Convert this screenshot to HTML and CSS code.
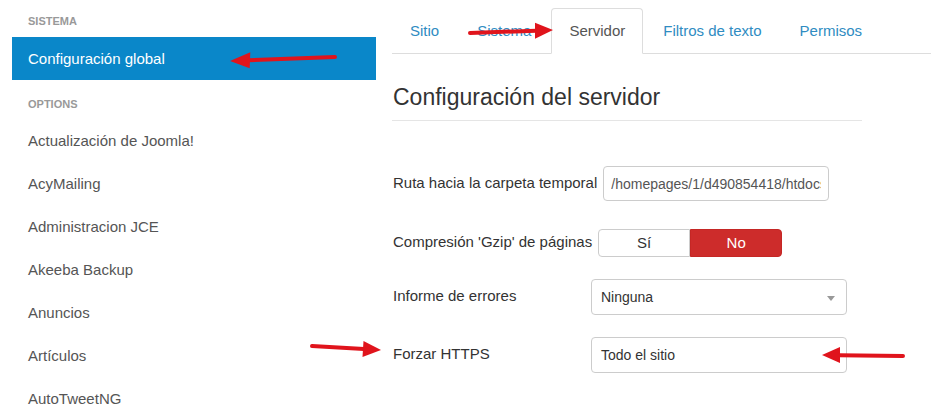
FILE: index.html
```html
<!DOCTYPE html>
<html lang="es">
<head>
    <meta charset="UTF-8">
    <meta name="viewport" content="width=device-width, initial-scale=1.0">
    <title>Configuración global</title>
    <link rel="stylesheet" href="styles.css">
</head>
<body>
    <div class="page">
        <aside class="sidebar">
            <ul class="nav-list">
                <li class="nav-header first">Sistema</li>
                <li class="active"><a href="#">Configuración global</a></li>
                <li class="nav-header">Options</li>
                <li><a href="#">Actualización de Joomla!</a></li>
                <li><a href="#">AcyMailing</a></li>
                <li><a href="#">Administracion JCE</a></li>
                <li><a href="#">Akeeba Backup</a></li>
                <li><a href="#">Anuncios</a></li>
                <li><a href="#">Artículos</a></li>
                <li><a href="#">AutoTweetNG</a></li>
            </ul>
        </aside>

        <main class="content">
            <ul class="nav-tabs">
                <li><a href="#">Sitio</a></li>
                <li><a href="#">Sistema</a></li>
                <li class="active"><a href="#">Servidor</a></li>
                <li><a href="#">Filtros de texto</a></li>
                <li><a href="#">Permisos</a></li>
            </ul>

            <div class="tab-pane">
                <h2 class="pane-title">Configuración del servidor</h2>

                <div class="form">
                    <div class="control-group gap-lg">
                        <label class="control-label">Ruta hacia la carpeta temporal</label>
                        <input class="input-path" type="text" value="/homepages/1/d490854418/htdocs/tmp">
                    </div>
                    <div class="control-group">
                        <label class="control-label">Compresión 'Gzip' de páginas</label>
                        <div class="btn-group">
                            <span class="btn">Sí</span>
                            <span class="btn btn-danger">No</span>
                        </div>
                    </div>
                    <div class="control-group">
                        <label class="control-label">Informe de errores</label>
                        <div class="select">
                            <span>Ninguna</span>
                            <span class="caret"></span>
                        </div>
                    </div>
                    <div class="control-group">
                        <label class="control-label">Forzar HTTPS</label>
                        <div class="select">
                            <span>Todo el sitio</span>
                        </div>
                    </div>
                </div>
            </div>
        </main>

        <!-- red arrows drawn over the screenshot -->
        <svg class="annotations" width="931" height="408" viewBox="0 0 931 408">
            <g stroke="#e0141c" stroke-width="4" stroke-linecap="round">
                <line x1="335" y1="57" x2="249" y2="60.3"/>
                <line x1="470" y1="33" x2="536" y2="30.7"/>
                <line x1="312" y1="346" x2="364" y2="349"/>
                <line x1="903" y1="356" x2="839" y2="355.2"/>
            </g>
            <g fill="#e0141c">
                <polygon points="250.3,52.2 249.7,68.2 230,61"/>
                <polygon points="535,22.7 535,38.7 553,30"/>
                <polygon points="363.5,341 362.5,357 381,350"/>
                <polygon points="840,347 840,363 822,355"/>
            </g>
        </svg>
    </div>
</body>
</html>
```

FILE: styles.css
```css
body {
    margin: 0;
    background-color: #fff;
    font-family: 'Liberation Sans', Arial, sans-serif;
    color: #333;
    overflow: hidden;
}
.page {
    position: relative;
    display: flex;
    width: 931px;
    height: 408px;
    overflow: hidden;
}
ul {
    list-style: none;
    margin: 0;
    padding: 0;
}
a {
    text-decoration: none;
}

/* sidebar */
.sidebar {
    flex: none;
    width: 364px;
    padding-left: 12px;
}
.nav-header {
    padding: 17px 16px 7px;
    font-size: 11px;
    line-height: 15px;
    font-weight: bold;
    text-transform: uppercase;
    color: #999;
}
.nav-header.first {
    padding-top: 14px;
    padding-bottom: 8px;
}
.nav-list a {
    display: block;
    padding: 0 16px;
    line-height: 43px;
    font-size: 15px;
    color: #555;
}
.nav-list .active a {
    background-color: #0a87c9;
    color: #fff;
}

/* main */
.content {
    flex: 1;
    margin-left: 16px;
}
.nav-tabs {
    display: flex;
    margin-top: 8px;
    border-bottom: 1px solid #ddd;
}
.nav-tabs li {
    margin-bottom: -1px;
    margin-right: 2px;
}
.nav-tabs a {
    display: block;
    padding: 0 17px;
    line-height: 44px;
    font-size: 15px;
    color: #2f8cc2;
    border: 1px solid transparent;
    border-radius: 4px 4px 0 0;
}
.nav-tabs .active a {
    color: #555;
    background-color: #fff;
    border-color: #ddd;
    border-bottom-color: transparent;
}

.tab-pane {
    width: 470px;
}
.pane-title {
    margin: 30px 0 0;
    padding: 0 0 9px 1px;
    font-size: 23px;
    line-height: 27px;
    font-weight: normal;
    color: #333;
    border-bottom: 1px solid #e5e5e5;
}

.form {
    margin-top: 45px;
    padding-left: 1px;
}
.control-group {
    display: flex;
    align-items: center;
    margin-bottom: 22px;
}
.control-group.gap-lg {
    margin-bottom: 28px;
}
.control-label {
    flex: none;
    min-width: 192px;
    margin-right: 6px;
    margin-bottom: 3px;
    font-size: 15px;
    color: #333;
}

.input-path,
.select {
    box-sizing: border-box;
    border: 1px solid #ccc;
    border-radius: 4px;
    font-family: inherit;
    font-size: 14px;
    color: #555;
    background-color: #fff;
}
.input-path {
    width: 226px;
    height: 35px;
    padding: 0 7px;
    outline: none;
}
.select {
    position: relative;
    display: flex;
    align-items: center;
    width: 256px;
    height: 36px;
    padding: 0 9px;
    color: #333;
}
.caret {
    position: absolute;
    right: 11px;
    top: 16px;
    border-left: 4px solid transparent;
    border-right: 4px solid transparent;
    border-top: 5px solid #999;
}

.btn-group {
    display: flex;
}
.btn {
    box-sizing: border-box;
    width: 92px;
    height: 28px;
    line-height: 26px;
    text-align: center;
    font-size: 15px;
    color: #333;
    border: 1px solid #ccc;
    border-radius: 4px 0 0 4px;
}
.btn-danger {
    color: #fff;
    background-color: #cd2c2b;
    border-color: #c52725;
    border-radius: 0 4px 4px 0;
}

/* annotation layer */
.annotations {
    position: absolute;
    top: 0;
    left: 0;
    pointer-events: none;
}
```
